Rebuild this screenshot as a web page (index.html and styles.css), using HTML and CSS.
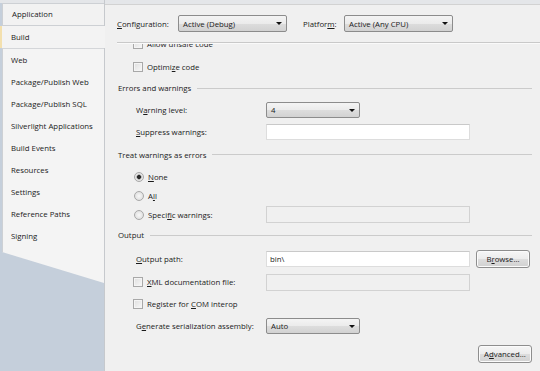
FILE: index.html
```html
<!DOCTYPE html>
<html>
<head>
	<title>Build</title>
	<link rel="stylesheet" href="styles.css">
</head>
<body>

<div class="sidebar">
	<div class="tab first">Application</div>
	<div class="tab active">Build</div>
	<div class="tab-list">
		<div class="tab">Web</div>
		<div class="tab">Package/Publish Web</div>
		<div class="tab">Package/Publish SQL</div>
		<div class="tab">Silverlight Applications</div>
		<div class="tab">Build Events</div>
		<div class="tab">Resources</div>
		<div class="tab">Settings</div>
		<div class="tab">Reference Paths</div>
		<div class="tab">Signing</div>
	</div>
</div>

<div class="content">
	<div class="config-bar">
		<span class="config-label"><u>C</u>onfiguration:</span>
		<div class="combo config-combo">Active (Debug)</div>
		<span class="config-label platform">Platfor<u>m</u>:</span>
		<div class="combo config-combo">Active (Any CPU)</div>
	</div>

	<div class="scroll">
		<div class="pane">
			<div class="row check-row first-row"><span class="check"></span><span>Allow unsafe code</span></div>
			<div class="row check-row"><span class="check"></span><span>Optimi<u>z</u>e code</span></div>

			<div class="section"><span>Errors and warnings</span></div>
			<div class="row field-row">
				<span class="label">W<u>a</u>rning level:</span>
				<div class="combo small">4</div>
			</div>
			<div class="row field-row short">
				<span class="label"><u>S</u>uppress warnings:</span>
				<div class="textbox"></div>
			</div>

			<div class="section tall"><span>Treat warnings as errors</span></div>
			<div class="row radio-row"><span class="radio on"></span><span><u>N</u>one</span></div>
			<div class="row radio-row"><span class="radio"></span><span>A<u>l</u>l</span></div>
			<div class="row radio-row">
				<span class="radio"></span><span class="radio-label">Speci<u>f</u>ic warnings:</span>
				<div class="textbox disabled"></div>
			</div>

			<div class="section"><span>Output</span></div>
			<div class="row field-row tall">
				<span class="label"><u>O</u>utput path:</span>
				<div class="textbox">bin\</div>
				<div class="button">B<u>r</u>owse...</div>
			</div>
			<div class="row check-row field-check">
				<span class="check"></span><span class="check-label"><u>X</u>ML documentation file:</span>
				<div class="textbox disabled"></div>
			</div>
			<div class="row check-row"><span class="check"></span><span>Register for <u>C</u>OM interop</span></div>
			<div class="row field-row gen">
				<span class="label">G<u>e</u>nerate serialization assembly:</span>
				<div class="combo small">Auto</div>
			</div>

			<div class="actions">
				<div class="button">A<u>d</u>vanced...</div>
			</div>
		</div>
	</div>
</div>

</body>
</html>
```

FILE: styles.css
```css
body {
	margin: 0;
	width: 540px;
	height: 371px;
	overflow: hidden;
	display: flex;
	background-color: #e4e6e9;
	font-family: "Open Sans", "Liberation Sans", sans-serif;
	font-size: 7.8px;
	color: #1a1a1a;
}

u {
	text-decoration-thickness: 1px;
	text-underline-offset: 1px;
}

/* left tab strip */
.sidebar {
	width: 104px;
	border-right: solid 1px #c6c9cd;
	padding-top: 3px;
	background: linear-gradient(#e4e6e9 0 3px, #c5cfdb 3px);
	display: flex;
	flex-direction: column;
}

.tab {
	height: 22px;
	line-height: 22px;
	padding-left: 9px;
	white-space: nowrap;
}

.tab.first {
	margin-left: 2px;
	border: solid 1px #cdd0d4;
	border-right: none;
	height: 21px;
	line-height: 21px;
	background-color: #f2f2f2;
}

.tab.active {
	margin-right: -1px;
	border-left: solid 2px #f3e0ae;
	padding-left: 9px;
	background-color: #f3f3f3;
}

.tab-list {
	margin-left: 2px;
	border-left: solid 1px #cdd0d4;
	border-top: solid 1px #d4d6d9;
	padding-bottom: 36px;
	background-color: #f4f4f4;
	clip-path: polygon(0 0, 100% 0, 100% 100%, 0 calc(100% - 31px));
}

.tab-list .tab {
	padding-left: 8px;
}

/* property page */
.content {
	flex: 1;
	margin-top: 4px;
	border-top: solid 1px #d2d2d2;
	background-color: #f0f0f0;
	display: flex;
	flex-direction: column;
	min-width: 0;
}

.config-bar {
	display: flex;
	align-items: center;
	height: 37px;
	margin-left: 12px;
	border-bottom: solid 1px #c9c9c9;
	box-shadow: 0 1px 0 #fafafa;
	position: relative;
	z-index: 1;
}

.config-label {
	width: 61px;
}

.config-label.platform {
	width: 41px;
	margin-left: 16px;
}

.combo {
	box-sizing: border-box;
	height: 17px;
	border: solid 1px #8c8c8c;
	border-radius: 2px;
	padding: 0 4px;
	background: linear-gradient(#f4f4f4, #ebebeb 50%, #dddddd 51%, #d2d2d2);
	display: flex;
	align-items: center;
	justify-content: space-between;
}

.combo::after {
	content: "";
	border-left: solid 3px transparent;
	border-right: solid 3px transparent;
	border-top: solid 3px #111;
}

.config-combo {
	width: 109px;
}

.combo.small {
	width: 94px;
	height: 16px;
}

.scroll {
	flex: 1;
	overflow: hidden;
}

.pane {
	margin-top: -11px;
	padding: 0 8px 0 13px;
}

.row {
	display: flex;
	align-items: center;
	height: 21px;
}

.row.first-row {
	height: 24px;
}

.check-row {
	padding-left: 15px;
}

.check {
	box-sizing: border-box;
	width: 10px;
	height: 10px;
	margin-right: 4px;
	border: solid 1px #a8a8a8;
	background: linear-gradient(135deg, #dedede, #f8f8f8);
	box-shadow: inset 0 0 0 1px #f4f4f4;
}

.check-label {
	width: 119px;
}

.field-check {
	height: 22px;
}

.field-row {
	height: 22px;
	padding-left: 18px;
}

.field-row.short {
	height: 21px;
}

.field-row.tall {
	height: 25px;
}

.field-row.gen {
	height: 24px;
}

.label {
	width: 130px;
}

.textbox {
	box-sizing: border-box;
	width: 204px;
	height: 16px;
	padding-left: 3px;
	line-height: 14px;
	border: solid 1px #dddddd;
	border-top-color: #c9c9c9;
	background-color: #fff;
}

.textbox.disabled {
	height: 17px;
	border-color: #d2d2d2;
	background-color: #f0f0f0;
}

.button {
	box-sizing: border-box;
	width: 54px;
	height: 18px;
	margin-left: 6px;
	border: solid 1px #8e8e8e;
	border-radius: 3px;
	background: linear-gradient(#f6f6f6, #ececec 50%, #dddddd 51%, #d1d1d1);
	box-shadow: inset 0 0 0 1px #fbfbfb;
	display: flex;
	align-items: center;
	justify-content: center;
}

.section {
	display: flex;
	align-items: center;
	height: 22px;
}

.section.tall {
	height: 25px;
}

.section::after {
	content: "";
	flex: 1;
	margin-left: 6px;
	border-top: solid 1px #cbcbcb;
}

.radio-row {
	height: 19px;
	padding-left: 16px;
}

.radio {
	box-sizing: border-box;
	width: 10px;
	height: 10px;
	margin-right: 4px;
	border: solid 1px #a8a8a8;
	border-radius: 50%;
	background: radial-gradient(#f8f8f8, #d8d8d8);
}

.radio.on {
	background: radial-gradient(#2a2a2a 0 1.6px, #9a9a9a 2.2px, #e8e8e8 3px, #d8d8d8);
}

.radio-label {
	width: 118px;
}

.actions {
	display: flex;
	justify-content: flex-end;
	margin-top: 7px;
}
```
